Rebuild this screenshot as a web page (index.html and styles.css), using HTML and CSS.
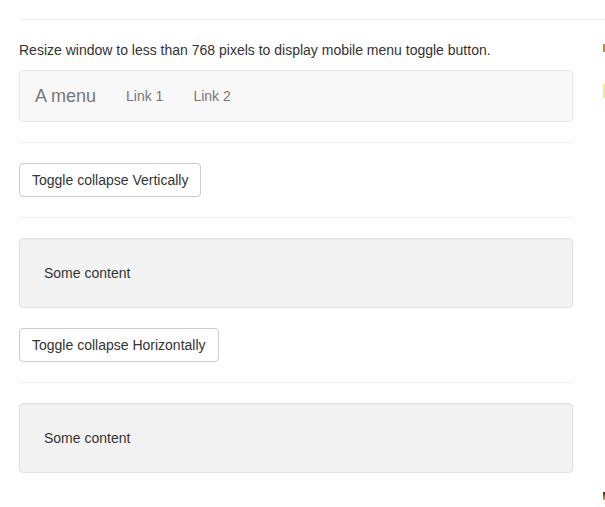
FILE: index.html
```html
<!DOCTYPE html>
<html lang="en">
<head>
<meta charset="utf-8">
<title>Collapse demo</title>
<link rel="stylesheet" href="styles.css">
</head>
<body>
<div class="page">
  <hr class="top-rule">
  <div class="layout">
    <main class="main">
      <p class="intro">Resize window to less than 768 pixels to display mobile menu toggle button.</p>
      <nav class="navbar">
        <a class="brand" href="#">A menu</a>
        <ul class="nav-links">
          <li><a href="#">Link 1</a></li>
          <li><a href="#">Link 2</a></li>
        </ul>
      </nav>
      <hr class="rule">
      <button class="btn" type="button">Toggle collapse Vertically</button>
      <hr class="rule">
      <div class="well">Some content</div>
      <button class="btn" type="button">Toggle collapse Horizontally</button>
      <hr class="rule">
      <div class="well">Some content</div>
    </main>
    <aside class="side">
      <span class="mark mark-orange"></span>
      <span class="mark mark-yellow"></span>
      <span class="mark mark-dark"></span>
    </aside>
  </div>
</div>
</body>
</html>
```
FILE: styles.css
```css
* { box-sizing: border-box; }
html, body {
  margin: 0;
  background: #fff;
  overflow: hidden;
}
body {
  font-family: "Liberation Sans", Arial, sans-serif;
  font-size: 14px;
  line-height: 20px;
  color: #333;
  width: 605px;
  height: 507px;
}
.page {
  padding: 19px 0 0 19px;
}
.top-rule {
  margin: 0;
  border: 0;
  border-top: 1px solid #eee;
  height: 0;
}
.layout {
  display: flex;
  gap: 30px;
}
.main {
  width: 554px;
  flex: none;
  padding-top: 20px;
}
.intro {
  margin: 0 0 10px;
}
.navbar {
  display: flex;
  align-items: center;
  height: 52px;
  background: #f8f8f8;
  border: 1px solid #e7e7e7;
  border-radius: 4px;
  margin-bottom: 20px;
}
.brand {
  font-size: 18px;
  line-height: 20px;
  padding: 15px;
  color: #777;
  text-decoration: none;
}
.nav-links {
  display: flex;
  list-style: none;
  margin: 0;
  padding: 0;
}
.nav-links a {
  display: block;
  padding: 15px;
  color: #777;
  text-decoration: none;
}
.rule {
  margin: 0 0 20px;
  border: 0;
  border-top: 1px solid #eee;
  height: 0;
}
.btn {
  display: block;
  font-family: inherit;
  font-size: 14px;
  line-height: 20px;
  color: #333;
  background: #fff;
  border: 1px solid #ccc;
  border-radius: 4px;
  padding: 6px 12px;
  margin-bottom: 20px;
  cursor: pointer;
}
.well {
  background: #f3f3f3;
  border: 1px solid #e3e3e3;
  border-radius: 4px;
  box-shadow: inset 0 1px 1px rgba(0,0,0,.05);
  padding: 24px;
  min-height: 70px;
  margin-bottom: 20px;
}
.side {
  position: relative;
  flex: 1;
}
.mark {
  position: absolute;
  left: 0;
  width: 3px;
}
.mark-orange {
  top: 24px;
  height: 8px;
  background: #d9782b;
}
.mark-yellow {
  top: 64px;
  height: 14px;
  background: #f4f06a;
}
.mark-dark {
  top: 472px;
  height: 8px;
  background: linear-gradient(#3a2a20, #e8a040);
}
```
